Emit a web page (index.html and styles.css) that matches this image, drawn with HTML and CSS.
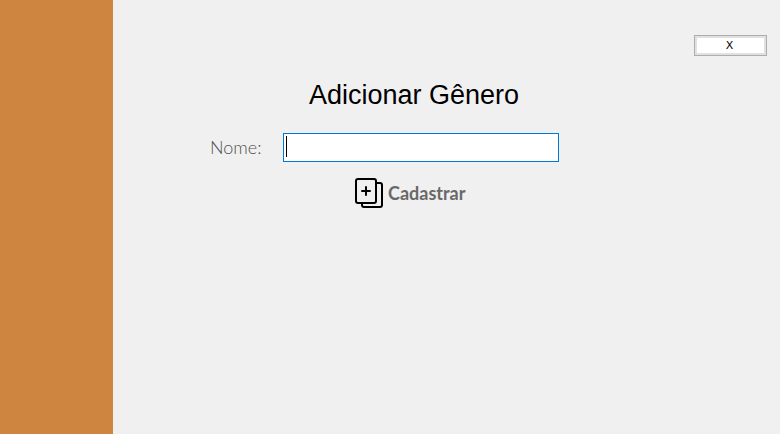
FILE: index.html
```html
<!DOCTYPE html>
<html lang="pt-BR">
<head>
<meta charset="utf-8">
<title>Adicionar Gênero</title>
<link rel="stylesheet" href="styles.css">
</head>
<body>
<div class="window">
  <aside class="sidebar"></aside>
  <main class="content">
    <header class="toolbar">
      <button class="close" type="button">X</button>
    </header>
    <form class="form">
      <h1 class="title">Adicionar Gênero</h1>
      <div class="field">
        <label class="label" for="nome">Nome:</label>
        <div class="entry">
          <input class="input" id="nome" type="text">
          <span class="caret"></span>
        </div>
      </div>
      <button class="submit" type="submit">
        <svg class="icon" viewBox="0 0 28 30" fill="none" stroke="#000" stroke-width="2" stroke-linecap="round" stroke-linejoin="round">
          <rect x="1" y="1" width="20" height="24" rx="2"/>
          <path d="M22 5h3a2 2 0 0 1 2 2v20a2 2 0 0 1-2 2H9a2 2 0 0 1-2-2v-1"/>
          <path d="M11 9v8M7 13h8"/>
        </svg>
        <span>Cadastrar</span>
      </button>
    </form>
  </main>
</div>
</body>
</html>
```
FILE: styles.css
```css
* {
  box-sizing: border-box;
}

body {
  margin: 0;
  background: #f0f0f0;
  font-family: "Liberation Sans", Arial, sans-serif;
  color: #000;
}

.window {
  display: flex;
  min-height: 100vh;
}

.sidebar {
  flex: 0 0 113px;
  background: #cd853f;
}

.content {
  flex: 1;
}

.toolbar {
  display: flex;
  justify-content: flex-end;
  padding: 35px 13px 0 0;
}

.close {
  width: 73px;
  height: 21px;
  padding: 0 2px 0 0;
  border: 1px solid #adadad;
  background: #fff;
  box-shadow: inset 0 0 0 2px #e1e1e1;
  font: 11px/16px "DejaVu Sans", sans-serif;
  color: #000;
}

.form {
  display: flex;
  flex-direction: column;
  align-items: flex-start;
  padding: 24px 24px 0 97px;
}

.title {
  margin: 0 0 23px 99px;
  font-size: 27px;
  font-weight: 400;
  line-height: 30px;
}

.field {
  display: flex;
  align-items: center;
  width: 100%;
}

.label {
  flex: 0 0 73px;
  padding-bottom: 2px;
  font: 300 18px/24px Lato, sans-serif;
  color: #505050;
}

.entry {
  position: relative;
  flex: 0 1 276px;
}

.input {
  display: block;
  width: 100%;
  height: 29px;
  padding: 2px;
  border: 1px solid #0078d7;
  outline: 0;
  background: #fff;
  font: 18px/24px Lato, sans-serif;
}

.caret {
  position: absolute;
  top: 3px;
  left: 3px;
  width: 1px;
  height: 21px;
  background: #000;
}

.input:focus + .caret {
  display: none;
}

.submit {
  display: flex;
  align-items: center;
  gap: 5px;
  margin: 16px 0 0 145px;
  padding: 0;
  border: 0;
  background: none;
  font: 700 18px/24px Lato, sans-serif;
  color: #696969;
}

.icon {
  width: 28px;
  height: 30px;
}
```
